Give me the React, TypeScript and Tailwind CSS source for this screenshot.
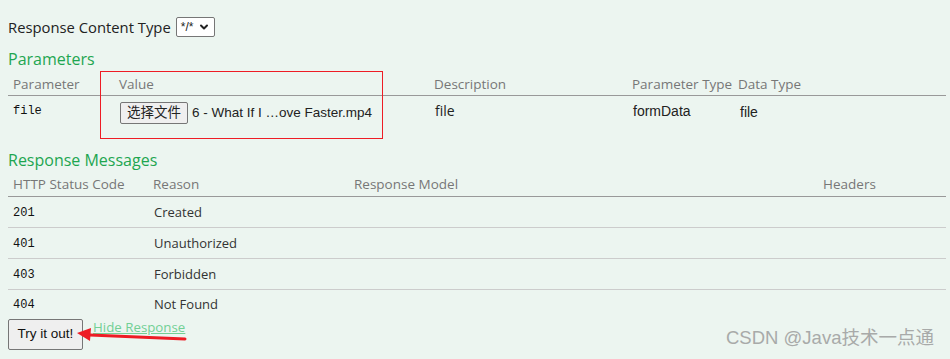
import { ChevronDown } from 'lucide-react'

const paramCols = 'grid grid-cols-[106px_315px_198px_106px_213px]'
const respCols = 'grid grid-cols-[140px_201px_469px_128px]'

const responses = [
  { code: '201', reason: 'Created' },
  { code: '401', reason: 'Unauthorized' },
  { code: '403', reason: 'Forbidden' },
  { code: '404', reason: 'Not Found' },
]

export default function App() {
  return (
    <div className="relative w-[950px] h-[359px] overflow-hidden bg-[#ecf5f0] font-['Open_Sans',sans-serif] text-[#333]">
      <div className="pl-2 pr-1 pt-[16px]">
        {/* content type */}
        <div className="flex items-center h-[22px] text-[14.8px] text-[#222]">
          <span>Response Content Type</span>
          <div className="ml-[5px] flex items-center justify-between w-[39px] h-[20px] px-[4px] border border-[#767676] rounded-[2px] bg-white text-[12px] font-['Liberation_Sans',sans-serif]">
            <span>*/*</span>
            <ChevronDown className="w-[12px] h-[12px]" strokeWidth={4} />
          </div>
        </div>

        {/* parameters */}
        <h4 className="mt-[10px] h-[23px] leading-[23px] text-[16px] text-[#1ea650]">Parameters</h4>
        <div className={`${paramCols} h-[25px] pt-[2px] items-center text-[13.5px] text-[#777] border-b border-[#999]`}>
          <div className="pl-[5px]">Parameter</div>
          <div className="pl-[5px]">Value</div>
          <div className="pl-[5px]">Description</div>
          <div className="pl-[5px]">Parameter Type</div>
          <div className="pl-[5px]">Data Type</div>
        </div>
        <div className={`${paramCols} h-[42px] text-[14px] text-[#222]`}>
          <div className="pl-[5px] pt-[6px] font-['Liberation_Mono',monospace] text-[12px] text-[#111]">file</div>
          <div className="pl-[6px] pt-[6px] flex items-start gap-[4px] font-['Liberation_Sans','Noto_Sans_CJK_SC',sans-serif] text-[13.5px]">
            <button className="h-[22px] w-[68px] border border-[#767676] rounded-[2px] bg-[#efefef] text-[13.5px] leading-none">选择文件</button>
            <span className="leading-[22px]">6 - What If I …ove Faster.mp4</span>
          </div>
          <div className="pl-[6px] pt-[4px]">file</div>
          <div className="pl-[6px] pt-[5px] font-['Liberation_Sans',sans-serif]">formData</div>
          <div className="pl-[7px] pt-[6px] font-['Liberation_Sans',sans-serif]">file</div>
        </div>

        {/* response messages */}
        <h4 className="mt-[11px] h-[23px] leading-[23px] text-[16px] text-[#1ea650]">Response Messages</h4>
        <div className={`${respCols} h-[25px] pt-[1px] items-center text-[13.5px] text-[#777] border-b border-[#999]`}>
          <div className="pl-[5px]">HTTP Status Code</div>
          <div className="pl-[5px]">Reason</div>
          <div className="pl-[5px]">Response Model</div>
          <div className="pl-[5px]">Headers</div>
        </div>
        {responses.map((r, i) => (
          <div
            key={r.code}
            className={`${respCols} items-center pt-[1px] text-[13px] text-[#333] ${i < responses.length - 1 ? 'h-[31px] border-b border-[#ccc]' : 'h-[29px]'}`}
          >
            <div className="pl-[5px] font-['Liberation_Mono',monospace] text-[12px] text-[#111]">{r.code}</div>
            <div className="pl-[6px]">{r.reason}</div>
            <div />
            <div />
          </div>
        ))}

        {/* actions */}
        <div className="flex items-start gap-[10px]">
          <button className="h-[31px] w-[75px] border border-[#767676] rounded-[2px] bg-[#efefef] text-[13.5px] text-[#111] font-['Liberation_Sans',sans-serif]">
            Try it out!
          </button>
          <a className="-mt-[1px] text-[13.3px] text-[#72d095] underline">Hide Response</a>
        </div>
      </div>

      {/* annotation box around the value column */}
      <div className="absolute left-[100px] top-[71px] w-[283px] h-[68px] border border-[#ee1c25]" />

      {/* annotation arrow */}
      <svg className="absolute left-0 top-0 pointer-events-none" width="950" height="359">
        <line x1="185" y1="339" x2="90" y2="335" stroke="#ee1c25" strokeWidth="3" strokeLinecap="round" />
        <polygon points="77,333 91,328 90,341" fill="#ee1c25" />
      </svg>

      {/* watermark */}
      <div className="absolute left-[726px] top-[326px] text-[18.5px] leading-[24px] text-[#a8aaa9] font-['Liberation_Sans','Noto_Sans_CJK_SC',sans-serif]">
        CSDN @Java技术一点通
      </div>
    </div>
  )
}
